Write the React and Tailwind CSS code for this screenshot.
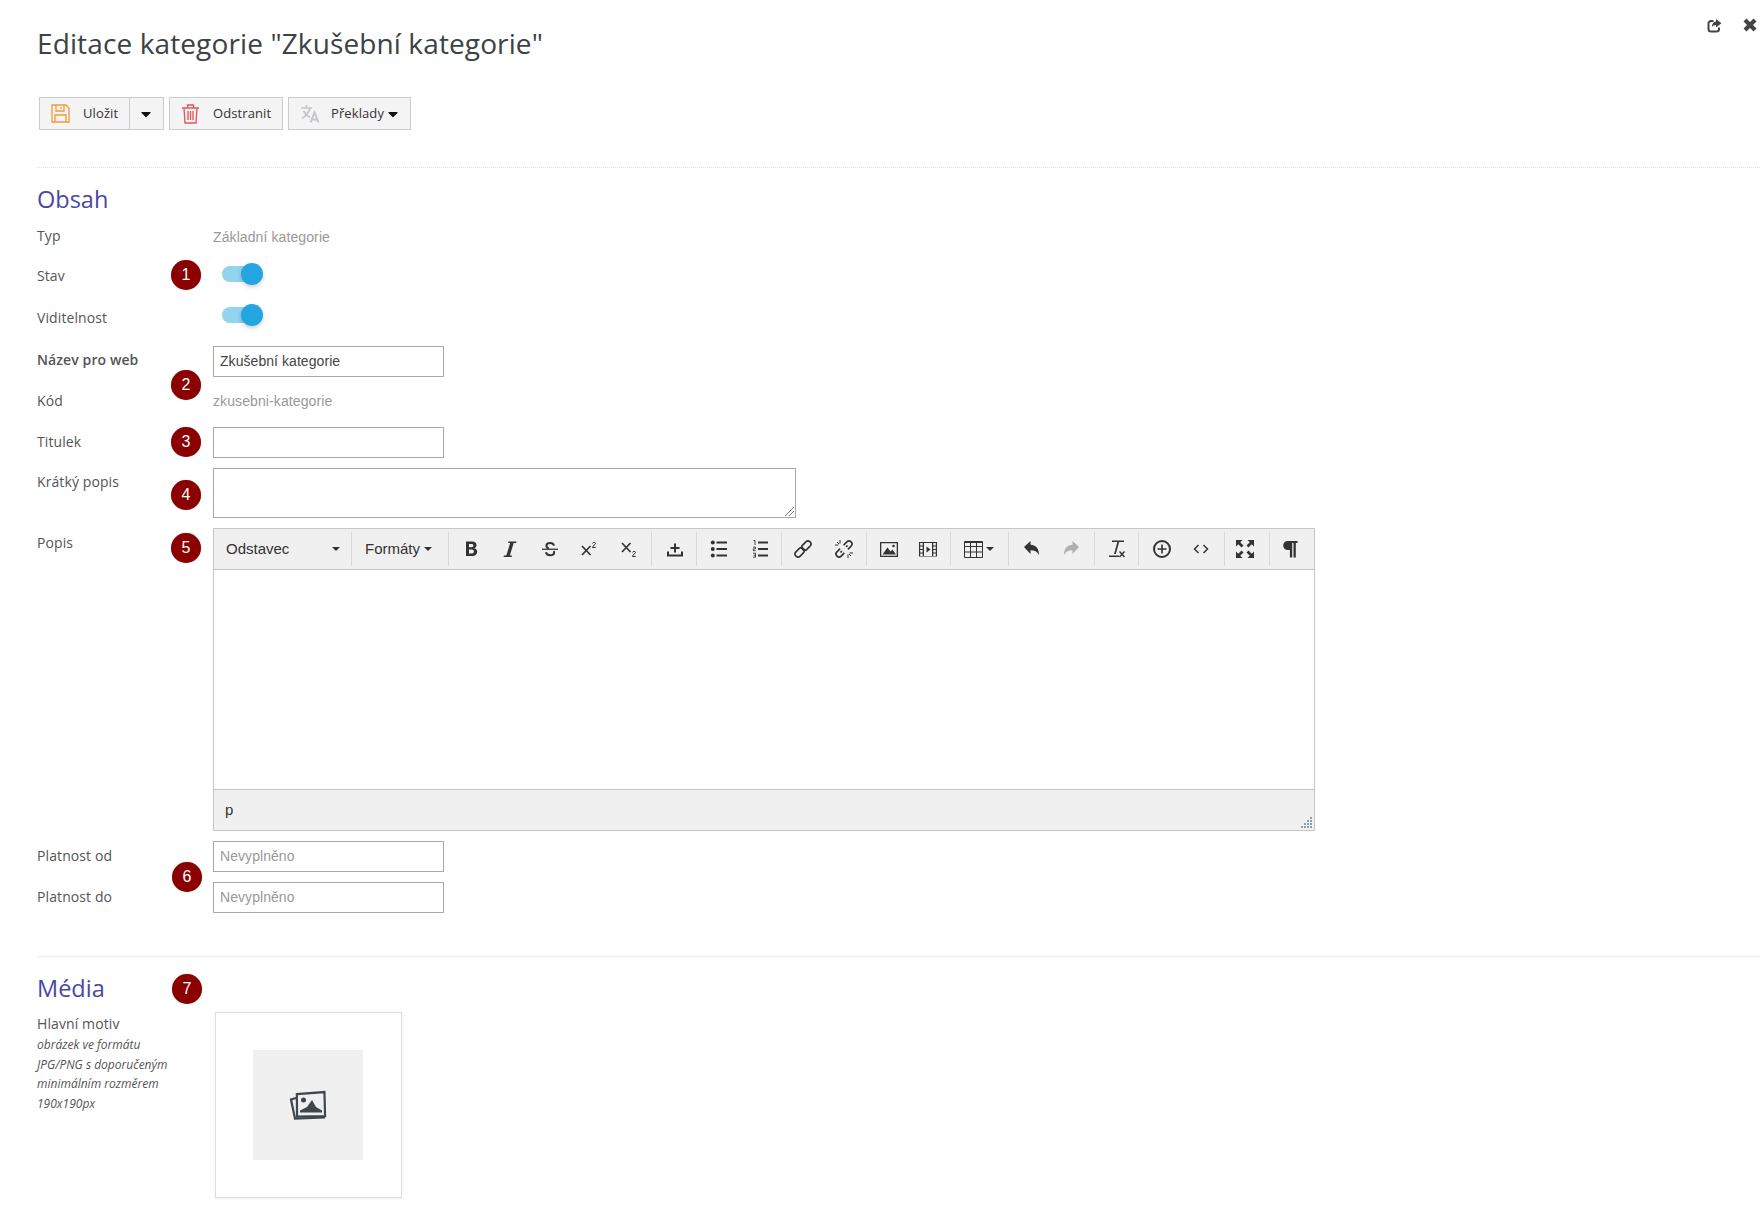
import { FaCaretDown } from 'react-icons/fa'

function Badge({ n, top, left = 171 }) {
  return (
    <div
      className="absolute w-[30px] h-[30px] rounded-full bg-[#8b0000] text-white flex items-center justify-center text-[16px] font-['Liberation_Sans',sans-serif] shadow-[0_0_1px_rgba(0,0,0,0.4)]"
      style={{ top, left }}
    >
      {n}
    </div>
  )
}

function Label({ children, className = '' }) {
  return <div className={`w-[176px] shrink-0 text-[14px] text-[#555] tracking-[0.1px] ${className}`}>{children}</div>
}

function TextInput({ value, placeholder }) {
  return (
    <div className="w-[231px] h-[31px] border border-[#a9a9a9] bg-white px-[6px] flex items-center text-[14px] tracking-[0.06px] font-['Liberation_Sans',sans-serif]">
      {value ? <span className="text-[#444]">{value}</span> : <span className="text-[#999]">{placeholder}</span>}
    </div>
  )
}

function Switch() {
  return (
    <div className="relative w-[41px] h-[22px] ml-[9px]">
      <div className="absolute left-0 top-[3px] w-[34px] h-[16px] rounded-full bg-[#92d3ee]"></div>
      <div className="absolute right-0 top-0 w-[22px] h-[22px] rounded-full bg-[#22a5e0] shadow-[0_2px_4px_rgba(0,0,0,0.2)]"></div>
    </div>
  )
}

function Ico({ children }) {
  return (
    <svg width="20" height="20" viewBox="0 0 20 20" fill="#333" className="block">
      {children}
    </svg>
  )
}

function Btn({ children }) {
  return <div className="w-[39.5px] h-[34px] flex items-center justify-center shrink-0">{children}</div>
}

function Group({ children, first, className = '' }) {
  return (
    <div className={`flex items-center h-[34px] shrink-0 ${first ? '' : 'border-l border-[#d9d9d9]'} ${className}`}>
      {children}
    </div>
  )
}

const Caret = () => <div className="w-0 h-0 border-x-[4px] border-x-transparent border-t-[4px] border-t-[#333]"></div>

function EditorToolbar() {
  return (
    <div className="h-[41px] bg-[#f0f0f0] border-b border-[#c5c5c5] flex items-center pl-[1px] text-[15px] text-[#333] font-['Liberation_Sans',sans-serif]">
      <Group first className="w-[136px] pl-[11px] pr-[11px] justify-between">
        <span>Odstavec</span>
        <Caret />
      </Group>
      <Group className="w-[97px] pl-[13px] gap-[4px]">
        <span>Formáty</span>
        <Caret />
      </Group>
      <Group className="w-[203px] pl-[2px]">
        <Btn>
          <Ico>
            <path fillRule="evenodd" d="M5 2.500h6.200c2.800 0 4.300 1.400 4.300 3.600 0 1.500-.8 2.700-2.200 3.100 1.800.4 2.900 1.700 2.900 3.500 0 2.600-1.800 4.300-4.800 4.300H5V2.500zm3 2.400v3.300h2.500c1.200 0 1.900-.6 1.900-1.700 0-1-.7-1.600-1.900-1.600H8zm0 5.600v4h2.800c1.400 0 2.100-.7 2.100-2s-.8-2-2.200-2H8z" />
          </Ico>
        </Btn>
        <Btn>
          <Ico>
            <path d="M8.500 2.500H16.500l-.4 1.500h-2.400L9.800 16.500h2.200l-.4 1.500H3.500l.4-1.500h2.400L10.200 4H8.100z" />
          </Ico>
        </Btn>
        <Btn>
          <Ico>
            <path d="M2 9.600h16v1.300H2z" />
            <path fill="none" stroke="#333" strokeWidth="2" d="M14 6.600c-.4-1.800-2-2.600-3.900-2.600-2.100 0-3.700 1-3.700 2.700 0 1.400.9 2.200 2.400 2.700M13.700 12c.3.400.4.900.4 1.400 0 1.800-1.700 2.800-4 2.800-2.200 0-3.800-1-4.200-2.900" />
          </Ico>
        </Btn>
        <Btn>
          <Ico>
            <path fill="none" stroke="#333" strokeWidth="1.700" d="M3 7l8.500 9M11.500 7L3 16" />
            <path fill="none" stroke="#333" strokeWidth="1" d="M13.500 4.500c.3-1.500 3-1.500 3 0 0 1.300-3 2-3 4h3.200" />
          </Ico>
        </Btn>
        <Btn>
          <Ico>
            <path fill="none" stroke="#333" strokeWidth="1.700" d="M3 4l8.500 9M11.500 4L3 13" />
            <path fill="none" stroke="#333" strokeWidth="1" d="M13.500 13.500c.3-1.500 3-1.500 3 0 0 1.300-3 2-3 4h3.200" />
          </Ico>
        </Btn>
      </Group>
      <Group className="w-[45px] pl-[3px]">
        <Btn>
          <Ico>
            <path d="M9 4.500h2v3.500h3.500v2H11v3.500H9V10H5.500V8H9z" />
            <path d="M2 12.500h2v3h12v-3h2V17.500H2z" />
          </Ico>
        </Btn>
      </Group>
      <Group className="w-[85px] pl-[2px] gap-[1.5px]">
        <Btn>
          <Ico>
            <circle cx="3.800" cy="3.500" r="2" />
            <circle cx="3.800" cy="10" r="2" />
            <circle cx="3.800" cy="16.500" r="2" />
            <path d="M7.500 2.500H18v2H7.500zM7.500 9H18v2H7.500zM7.500 15.500H18v2H7.500z" />
          </Ico>
        </Btn>
        <Btn>
          <Ico>
            <path d="M8 2.500h10v2H8zM8 9h10v2H8zM8 15.500h10v2H8z" />
            <path fill="none" stroke="#333" strokeWidth=".9" d="M3.500 1.500h1.500v4.500M3 8.200h2.500v1.700H3.300v1.800h2.400M3 14.200h2.500v4H3M3.700 16.200h1.800" />
          </Ico>
        </Btn>
      </Group>
      <Group className="w-[85px] pl-[1px] gap-[1.5px]">
        <Btn>
          <Ico>
            <g fill="none" stroke="#333" strokeWidth="1.600" transform="rotate(-45 10 10)">
              <rect x="0" y="7" width="10.500" height="6" rx="3" />
              <rect x="9.500" y="7" width="10.500" height="6" rx="3" />
            </g>
          </Ico>
        </Btn>
        <Btn>
          <Ico>
            <g fill="none" stroke="#333" strokeWidth="1.600">
              <g transform="rotate(-45 10 10)">
                <path d="M7.500 7H3a3 3 0 0 0 0 6h4.500M5 10h2" />
                <path d="M12.500 7H17a3 3 0 0 1 0 6h-4.500M15 10h-2" />
              </g>
              <path strokeWidth="1" d="M6 1v3.500M1 6h3.500M3 3l2 2M14 19v-3.500M19 14h-3.500M17 17l-2-2" />
            </g>
          </Ico>
        </Btn>
      </Group>
      <Group className="w-[84px] pl-[2px]">
        <Btn>
          <Ico>
            <path fillRule="evenodd" d="M1 3h18v15H1V3zm1.300 1.300v12.400h15.400V4.300H2.300z" />
            <path d="M3.500 15.500l5-7 3 4 2-2 3.500 5z" />
            <circle cx="14.500" cy="7" r="1.300" />
          </Ico>
        </Btn>
        <Btn>
          <Ico>
            <path fillRule="evenodd" d="M1 3h18v14.500H1V3zm1.200 1v2.500h2.500V4H2.200zm0 3.500V10h2.500V7.500H2.200zm0 3.500v2.500h2.500V11H2.200zm0 3.500V17h2.500v-2.500H2.200zM15.300 4v2.500h2.500V4h-2.500zm0 3.500V10h2.500V7.500h-2.500zm0 3.500v2.500h2.500V11h-2.500zm0 3.500V17h2.500v-2.500h-2.500zM6 4v13h8V4H6z" />
            <path d="M8.500 7.500l4 3-4 3z" />
          </Ico>
        </Btn>
      </Group>
      <Group className="w-[58px] pl-[13px] gap-[3px]">
        <svg width="19" height="17" viewBox="0 0 19 17" fill="none" stroke="#333" strokeWidth="1" className="block">
          <path d="M.5.500h18v16H.500zM.500 5.500h18M.500 11h18M6.500.500v16M12.500.500v16" />
          <path d="M.5 1.500h18" />
        </svg>
        <Caret />
      </Group>
      <Group className="w-[86px] pl-[3px]">
        <Btn>
          <Ico>
            <path d="M2 8l6.500-6v3.800c5 .3 8.500 3.200 8.500 10.200-1.800-3.300-4.300-4.700-8.500-4.700V15z" />
          </Ico>
        </Btn>
        <Btn>
          <svg width="20" height="20" viewBox="0 0 20 20" fill="#b0b0b0" className="block">
            <path d="M18 8l-6.500-6v3.800c-5 .3-8.500 3.200-8.500 10.200 1.800-3.300 4.300-4.700 8.500-4.700V15z" />
          </svg>
        </Btn>
      </Group>
      <Group className="w-[44px] pl-[1px]">
        <Btn>
          <Ico>
            <path d="M6 1.500h12V3h-4.800L9.800 15H8l3.400-12H6z" />
            <path d="M3 16.500h10V18H3z" />
            <path fill="none" stroke="#333" strokeWidth="1.400" d="M13.500 12.500l5 5.500M18.500 12.500l-5 5.500" />
          </Ico>
        </Btn>
      </Group>
      <Group className="w-[86px] pl-[3px]">
        <Btn>
          <Ico>
            <circle cx="10" cy="10" r="8" fill="none" stroke="#333" strokeWidth="2" />
            <path d="M9.200 5.500h1.600v3.700h3.700v1.600h-3.700v3.700H9.200v-3.700H5.500V9.200h3.700z" />
          </Ico>
        </Btn>
        <Btn>
          <Ico>
            <path fill="none" stroke="#333" strokeWidth="1.500" d="M7.500 6L3.500 10l4 4M12.500 6l4 4-4 4" />
          </Ico>
        </Btn>
      </Group>
      <Group className="w-[45px]">
        <Btn>
          <Ico>
            <path d="M1 1h6.500L5.200 3.300 8.500 6.500 6.500 8.500 3.300 5.200 1 7.500zM19 1v6.500l-2.300-2.300-3.200 3.300-2-2 3.300-3.200L12.500 1zM1 19v-6.500l2.300 2.300 3.200-3.300 2 2-3.300 3.200L7.500 19zM19 19h-6.500l2.300-2.300-3.300-3.200 2-2 3.200 3.300 2.300-2.300z" />
          </Ico>
        </Btn>
      </Group>
      <Group>
        <Btn>
          <Ico>
            <path d="M8 2h9.500v2h-1.700v14.500h-2.300V4h-1.300v14.500H9.900v-7.500H8c-2.900 0-4.800-1.900-4.800-4.500S5.100 2 8 2z" />
          </Ico>
        </Btn>
      </Group>
    </div>
  )
}

function App() {
  return (
    <div className="relative w-[1760px] h-[1215px] bg-white overflow-hidden font-['Open_Sans',sans-serif] pl-[37px]">
      <svg width="15" height="15" viewBox="0 0 15 15" fill="none" className="absolute top-[18px] left-[1707px]">
        <path d="M12 9.500v1.500a2.500 2.500 0 0 1-2.500 2.500H4A2.500 2.500 0 0 1 1.500 11V5.500A2.500 2.500 0 0 1 4 3h2.500" stroke="#444" strokeWidth="2" />
        <path d="M9 1l5.500 4.200L9 9.500V7C7 7 5.500 7.700 4.800 9.500 4.800 6 6.500 3.700 9 3.500z" fill="#444" />
      </svg>
      <svg width="14" height="14" viewBox="0 0 14 14" className="absolute top-[18px] left-[1743px]" stroke="#444" strokeWidth="4.200" fill="none">
        <path d="M2 2l10 10M12 2L2 12" />
      </svg>

      <h1 className="pt-[24px] text-[28px] leading-[38px] tracking-[0.12px] text-[#3b4245] font-medium">Editace kategorie "Zkušební kategorie"</h1>

      <div className="mt-[35px] ml-[2px] h-[33px] flex gap-[5px] text-[13px] tracking-[0.1px] text-[#333] font-medium">
        <div className="w-[125px] border border-[#ccc] bg-[#f4f4f4] flex">
          <div className="w-[90px] border-r border-[#ccc] flex items-center pl-[11px] gap-[13px]">
            <svg width="19" height="19" viewBox="0 0 19 19" fill="none" stroke="#f29a38" strokeWidth="1.300">
              <path d="M1 1h14l3 3v14H1z" />
              <path d="M5 1v6h8V1M10 3v2M4 18v-7h11v7" />
            </svg>
            <span>Uložit</span>
          </div>
          <div className="flex-1 flex items-center justify-center pr-[2px]">
            <FaCaretDown className="w-[16px] h-[16px] text-[#111]" />
          </div>
        </div>
        <div className="w-[114px] border border-[#ccc] bg-[#f4f4f4] flex items-center pl-[12px] gap-[14px]">
          <svg width="17" height="20" viewBox="0 0 17 20" fill="none" stroke="#e8505b" strokeWidth="1.300" className="shrink-0">
            <path d="M0 4h17M5.500 4V1h6v3M2 4l1 15h11l1-15M6 7v9M8.500 7v9M11 7v9" />
          </svg>
          <span>Odstranit</span>
        </div>
        <div className="w-[123px] border border-[#ccc] bg-[#f4f4f4] flex items-center pl-[11px] gap-[1px]">
          <svg width="20" height="20" viewBox="0 0 20 20" className="mr-[10px] shrink-0" fill="none" stroke="#c4c6ca" strokeWidth="1.700">
            <path d="M1 4h11M6.500 1v3M10 4C9 8 6 12 2 14.500M3.500 7c1.500 3 4 5 6.500 6.500" />
            <path d="M10.500 18.500l4-10 4 10M12 15.500h5" strokeWidth="2" />
          </svg>
          <span>Překlady</span>
          <FaCaretDown className="w-[16px] h-[16px] text-[#111]" />
        </div>
      </div>

      <div className="mt-[37px] border-t border-dotted border-[#dcdcdc]"></div>

      <h2 className="mt-[15px] text-[23.5px] leading-[32px] text-[#4a47a3] font-medium">Obsah</h2>

      <div className="mt-[1px] h-[40px] flex items-center">
        <Label className="-mt-[2px]">Typ</Label>
        <span className="mt-[2px] text-[14px] tracking-[0.1px] text-[#999] font-['Liberation_Sans',sans-serif]">Základní kategorie</span>
      </div>
      <div className="h-[39px] flex items-center">
        <Label>Stav</Label>
        <div className="-mt-[4px]"><Switch /></div>
      </div>
      <div className="mt-[2px] h-[41px] flex items-center">
        <Label>Viditelnost</Label>
        <div className="-mt-[5px]"><Switch /></div>
      </div>
      <div className="mt-[8px] flex items-center">
        <Label className="font-semibold text-[#444] -mt-[4px]">Název pro web</Label>
        <TextInput value="Zkušební kategorie" />
      </div>
      <div className="mt-[8px] h-[30px] flex items-center">
        <Label>Kód</Label>
        <span className="mt-[3px] text-[14px] tracking-[0.1px] text-[#999] font-['Liberation_Sans',sans-serif]">zkusebni-kategorie</span>
      </div>
      <div className="mt-[12px] flex items-center">
        <Label className="-mt-[2px]">Titulek</Label>
        <TextInput />
      </div>
      <div className="mt-[10px] flex">
        <Label className="pt-[3px]">Krátký popis</Label>
        <div className="relative w-[583px] h-[50px] border border-[#a9a9a9] bg-white">
          <svg width="9" height="9" viewBox="0 0 9 9" className="absolute right-[1px] bottom-[1px]" stroke="#777">
            <path d="M9 0L0 9M9 4L4 9" />
          </svg>
        </div>
      </div>
      <div className="mt-[10px] flex">
        <Label className="pt-[4px]">Popis</Label>
        <div className="w-[1102px] h-[303px] border border-[#c5c5c5] flex flex-col">
          <EditorToolbar />
          <div className="flex-1 bg-white"></div>
          <div className="relative h-[41px] bg-[#f0f0f0] border-t border-[#c5c5c5] pl-[11px] flex items-center text-[15px] text-[#333] font-['Liberation_Sans',sans-serif]">
            p
            <svg width="11" height="11" viewBox="0 0 11 11" className="absolute right-[2px] bottom-[2px]" fill="#8aa0b0">
              <path d="M9 0h2v2H9zM6 3h2v2H6zM9 3h2v2H9zM3 6h2v2H3zM6 6h2v2H6zM9 6h2v2H9zM0 9h2v2H0zM3 9h2v2H3zM6 9h2v2H6zM9 9h2v2H9z" />
            </svg>
          </div>
        </div>
      </div>
      <div className="mt-[10px] flex items-center">
        <Label className="-mt-[2px]">Platnost od</Label>
        <TextInput placeholder="Nevyplněno" />
      </div>
      <div className="mt-[10px] flex items-center">
        <Label className="-mt-[3px]">Platnost do</Label>
        <TextInput placeholder="Nevyplněno" />
      </div>

      <div className="mt-[43px] border-t border-dotted border-[#dcdcdc]"></div>

      <h2 className="mt-[15px] text-[23.5px] leading-[32px] text-[#4a47a3] font-medium">Média</h2>

      <div className="mt-[8px] flex">
        <div className="w-[178px] shrink-0 pt-[2px]">
          <div className="text-[14px] leading-[20px] tracking-[0.1px] text-[#555]">Hlavní motiv</div>
          <div className="mt-[1px] text-[12px] leading-[19.5px] italic text-[#555] w-[145px]">
            obrázek ve formátu JPG/PNG s doporučeným minimálním rozměrem 190x190px
          </div>
        </div>
        <div className="w-[187px] h-[186px] border border-[#ddd] shadow-[0_1px_2px_rgba(0,0,0,0.08)] flex items-center justify-center pr-[2px]">
          <div className="w-[110px] h-[110px] bg-[#f0f0f0] flex items-center justify-center">
            <svg width="38" height="30" viewBox="0 0 38 30" fill="none" stroke="#3d464d" strokeWidth="2.200">
              <path d="M7 8L2 9.500l4 19 30-1" />
              <path d="M7.500 4.500L35 1.500l1.500 24-28 1.500z" transform="rotate(2 20 14)" />
              <circle cx="14.500" cy="10" r="2.500" fill="#3d464d" stroke="none" />
              <path d="M11 20.500l7-3.500 5-7 4 7 6 3.500v2H11z" fill="#3d464d" stroke="none" />
            </svg>
          </div>
        </div>
      </div>

      <Badge n="1" top={260} />
      <Badge n="2" top={370} />
      <Badge n="3" top={427} />
      <Badge n="4" top={480} />
      <Badge n="5" top={533} />
      <Badge n="6" top={862} left={172} />
      <Badge n="7" top={974} left={172} />
    </div>
  )
}

export default App
